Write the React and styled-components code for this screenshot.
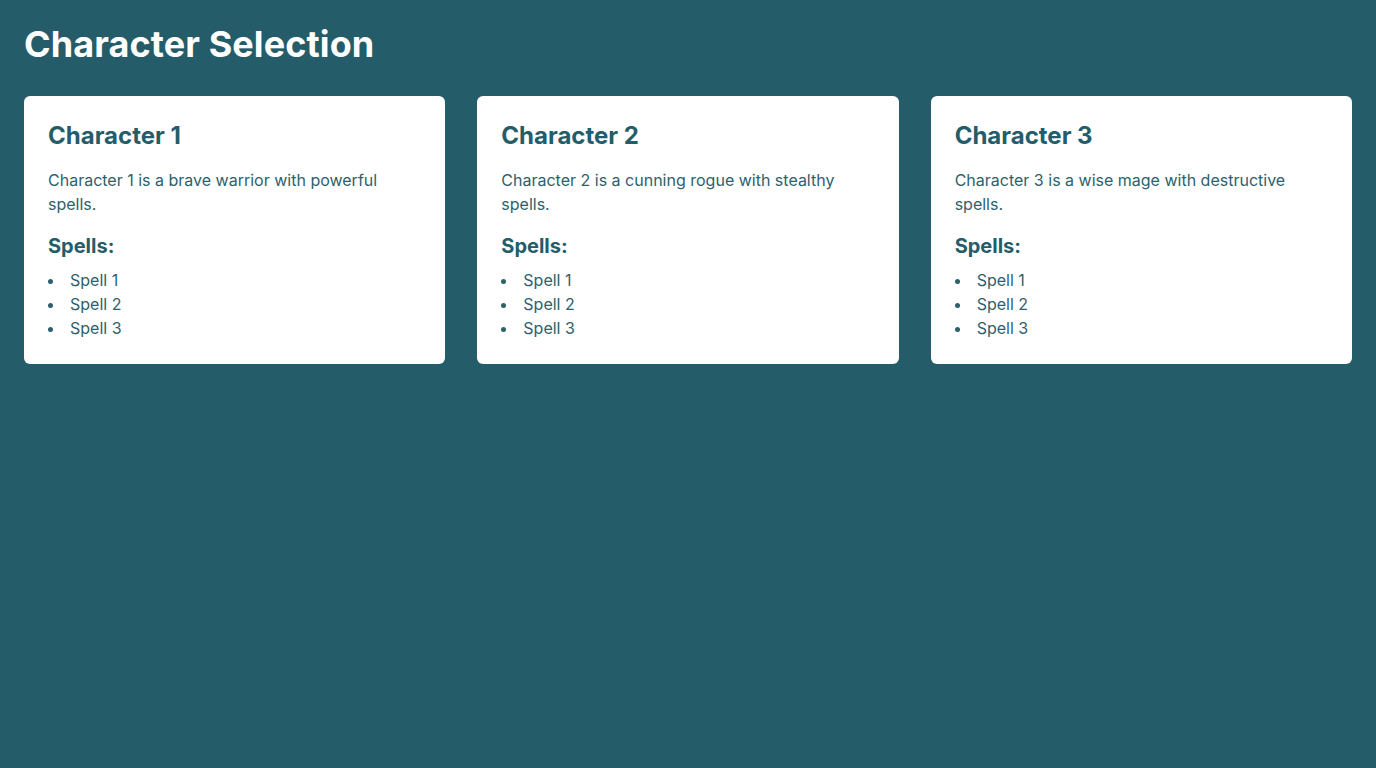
import React from "react";
import styled, { createGlobalStyle } from "styled-components";

const GlobalStyle = createGlobalStyle`
  html, body {
    margin: 0;
    padding: 0;
    background: #255c69;
    font-family: Inter, "Noto Sans", sans-serif;
  }
  * {
    box-sizing: border-box;
  }
`;

const Page = styled.main`
  min-height: 100vh;
  padding: 24px;
  background: #255c69;
`;

const Title = styled.h1`
  margin: 0 0 32px;
  font-size: 36px;
  line-height: 40px;
  font-weight: 700;
  letter-spacing: 0.1px;
  color: #ffffff;
`;

const Grid = styled.section`
  display: grid;
  grid-template-columns: repeat(3, 1fr);
  gap: 32px;
  align-items: start;
`;

const Card = styled.article`
  background: #ffffff;
  border-radius: 6px;
  padding: 24px;
  color: #255c69;
`;

const CardTitle = styled.h2`
  margin: 0 0 16px;
  font-size: 24px;
  line-height: 32px;
  font-weight: 700;
`;

const Description = styled.p`
  margin: 0 0 16px;
  font-size: 16px;
  line-height: 24px;
  color: #2f5f6b;
`;

const SpellsHeading = styled.h3`
  margin: 0 0 8px;
  font-size: 20px;
  line-height: 28px;
  font-weight: 700;
`;

const SpellList = styled.ul`
  margin: 0;
  padding: 0;
  list-style: disc inside;
  font-size: 16px;
  line-height: 24px;
  color: #2f5f6b;
`;

// the characters shown in the grid
const characters = [
  { name: "Character 1", text: "Character 1 is a brave warrior with powerful spells." },
  { name: "Character 2", text: "Character 2 is a cunning rogue with stealthy spells." },
  { name: "Character 3", text: "Character 3 is a wise mage with destructive spells." },
];

const spells = ["Spell 1", "Spell 2", "Spell 3"];

export default function App() {
  return (
    <>
      <GlobalStyle />
      <Page>
        <Title>Character Selection</Title>
        <Grid>
          {characters.map((c) => (
            <Card key={c.name}>
              <CardTitle>{c.name}</CardTitle>
              <Description>{c.text}</Description>
              <SpellsHeading>Spells:</SpellsHeading>
              <SpellList>
                {spells.map((s) => (
                  <li key={s}>{s}</li>
                ))}
              </SpellList>
            </Card>
          ))}
        </Grid>
      </Page>
    </>
  );
}
